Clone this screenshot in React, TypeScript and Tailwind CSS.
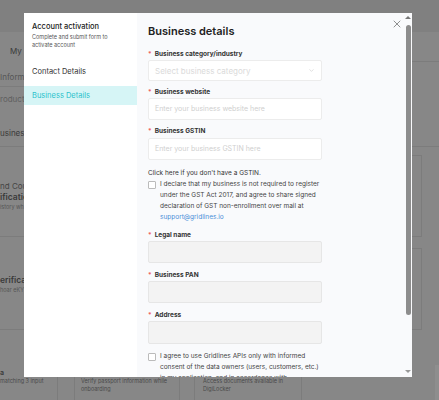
import { ChevronDown, X } from "lucide-react";

const font = { fontFamily: "Inter, 'Noto Sans', sans-serif" };

function Label({ text, className = "" }: { text: string; className?: string }) {
  return (
    <div className={`flex h-[11px] items-end gap-[3px] text-[6.5px] font-bold leading-[7px] text-[#333] ${className}`}>
      <span className="text-[#f05a5a]">*</span>
      <span>{text}</span>
    </div>
  );
}

function Field({
  placeholder,
  filled,
  className = "",
  h = "h-[22px]",
  select,
}: {
  placeholder?: string;
  filled?: boolean;
  className?: string;
  h?: string;
  select?: boolean;
}) {
  return (
    <div
      className={`flex w-[174px] items-center justify-between rounded-[2px] border px-[6px] text-[7px] text-[#cfcfcf] ${h} ${
        filled ? "border-[#e6e6e6] bg-[#f3f3f3]" : "border-[#ececec] bg-white"
      } ${className}`}
    >
      <span>{placeholder}</span>
      {select && <ChevronDown size={7} strokeWidth={1.5} className="text-[#bbb]" />}
    </div>
  );
}

function Checkbox({ lines, link, className = "" }: { lines: string[]; link?: string; className?: string }) {
  return (
    <div className={`flex gap-[4px] ${className}`}>
      <div className="mt-[2px] h-[8px] w-[8px] shrink-0 rounded-[1px] border border-[#bbb] bg-white" />
      <div className="whitespace-nowrap text-[6.5px] leading-[11px] text-[#444]">
        {lines.map((l) => (
          <div key={l}>{l}</div>
        ))}
        {link && <div className="text-[#4a8fd8]">{link}</div>}
      </div>
    </div>
  );
}

// the page that sits under the dimmed overlay
function Backdrop() {
  return (
    <div className="flex h-[400px] w-[439px] flex-col overflow-hidden bg-[#878787] text-[#3a3a3a]">
      <div className="h-[32px] shrink-0 bg-[#808080]" />
      <div className="flex h-[333px] shrink-0">
        <div className="flex w-[60px] flex-col whitespace-nowrap">
          <div className="flex h-[55px] flex-col border-b border-[#7c7c7c] pt-[13px]">
            <div className="pl-[10px] text-[8px]">My P</div>
            <div className="mt-[14px] text-[8px] text-[#555]">Inform</div>
          </div>
          <div className="h-[24px] pt-[6px] text-[8px] text-[#606060]">roducts</div>
          <div className="flex h-[36px] items-end border-b border-[#7c7c7c] pb-[7px] text-[8px]">usiness</div>
          <div className="flex h-[90px] flex-col border-b border-[#7c7c7c] pt-[34px]">
            <div className="text-[8px] leading-[10px] text-[#444]">nd Cou</div>
            <div className="text-[8.5px] font-semibold leading-[12px]">ification</div>
            <div className="text-[5.5px] leading-[8px] text-[#555]">istory wh</div>
          </div>
          <div className="flex h-[93px] flex-col border-b border-[#7c7c7c] pt-[37px]">
            <div className="text-[8.5px] font-semibold leading-[12px]">erificati</div>
            <div className="text-[5.5px] leading-[8px] text-[#555]">hoar eKY</div>
          </div>
        </div>
        <div className="flex-1" />
        <div className="flex w-[39px] flex-col">
          <div className="h-[30px] border-b border-[#7c7c7c]" />
          <div className="h-[85px] border-b border-[#7c7c7c]" />
          <div className="mt-[8px] h-[82px] w-[22px] border border-[#7c7c7c]" />
          <div className="mt-[11px] h-[82px] w-[22px] border border-[#7c7c7c]" />
        </div>
      </div>
      <div className="flex flex-1 text-[5.5px] leading-[8px] text-[#4a4a4a]">
        <div className="w-[58px] border-r border-[#7c7c7c] pt-[3px]">
          <div className="text-[7px] font-semibold leading-[9px] text-[#3a3a3a]">a</div>
          <div className="whitespace-nowrap">matching 3 input</div>
        </div>
        <div className="w-[17px] border-r border-[#7c7c7c]" />
        <div className="w-[105px] border-r border-[#7c7c7c] pl-[6px] pt-[12px]">
          Verify passport information while
          <br />
          onboarding
        </div>
        <div className="w-[15px] border-r border-[#7c7c7c]" />
        <div className="w-[107px] border-r border-[#7c7c7c] pl-[8px] pt-[12px]">
          Access documents available in
          <br />
          DigiLocker
        </div>
        <div className="flex-1" />
        <div className="w-[4px] bg-[#8e8e8e]" />
      </div>
    </div>
  );
}

export default function App() {
  return (
    <div className="relative h-[400px] w-[439px] overflow-hidden" style={font}>
      <Backdrop />

      {/* Modal */}
      <div className="absolute left-[24px] top-[13px] flex h-[364px] w-[388px] overflow-hidden bg-white">
        {/* Sidebar */}
        <div className="w-[113px] shrink-0 bg-white">
          <div className="px-[8px] pt-[8px]">
            <div className="text-[7.5px] font-medium leading-[12px] text-[#222]">Account activation</div>
            <div className="text-[5.5px] leading-[8px] text-[#555]">
              Complete and submit form to
              <br />
              activate account
            </div>
          </div>
          <div className="mt-[13px] flex h-[19px] items-center px-[8px] text-[7.5px] text-[#333]">Contact Details</div>
          <div className="mt-[5px] flex h-[19px] items-center bg-[#d6f5f6] px-[8px] text-[7.5px] text-[#2bc2cc]">
            Business Details
          </div>
        </div>

        {/* Content */}
        <div className="relative flex-1 bg-[#f9fafc] pl-[11px]">
          <div className="pt-[10px] text-[11px] font-semibold leading-[16px] text-[#222]">Business details</div>

          <Label text="Business category/industry" className="mt-[8px]" />
          <Field placeholder="Select business category" select h="h-[21px]" className="mt-[2px] text-[8px] text-[#dadada]" />

          <Label text="Business website" className="mt-[4px]" />
          <Field placeholder="Enter your business website here" className="mt-[2px]" />

          <Label text="Business GSTIN" className="mt-[4px]" />
          <Field placeholder="Enter your business GSTIN here" className="mt-[3px]" />

          <div className="mt-[8px] h-[10px] text-[6.5px] leading-[10px] text-[#333]">Click here if you don't have a GSTIN.</div>

          <Checkbox
            className="mt-[1px]"
            lines={[
              "I declare that my business is not required to register",
              "under the GST Act 2017, and agree to share signed",
              "declaration of GST non-enrollment over mail at",
            ]}
            link="support@gridlines.io"
          />

          <Label text="Legal name" className="mt-[5px]" />
          <Field filled className="mt-[2px]" />

          <Label text="Business PAN" className="mt-[5px]" />
          <Field filled className="mt-[2px]" />

          <Label text="Address" className="mt-[5px]" />
          <Field filled className="mt-[2px] h-[23px]" />

          <Checkbox
            className="mt-[7px]"
            lines={[
              "I agree to use Gridlines APIs only with informed",
              "consent of the data owners (users, customers, etc.)",
              "in my application, and in accordance with",
            ]}
          />

          {/* Close */}
          <X size={12} strokeWidth={1.3} className="absolute left-[254px] top-[5px] text-[#555]" />

          {/* Scrollbar */}
          <div className="absolute right-0 top-0 h-full w-[8px] bg-[#f9fafc]">
            <div className="absolute left-[1px] top-[3px] h-0 w-0 border-x-[3px] border-b-[3px] border-x-transparent border-b-[#777]" />
            <div className="absolute left-[1.5px] top-[12px] h-[290px] w-[5px] rounded-full bg-[#8d8d8d]" />
            <div className="absolute bottom-[4px] left-[1px] h-0 w-0 border-x-[3px] border-t-[3px] border-x-transparent border-t-[#999]" />
          </div>
        </div>
      </div>
    </div>
  );
}
